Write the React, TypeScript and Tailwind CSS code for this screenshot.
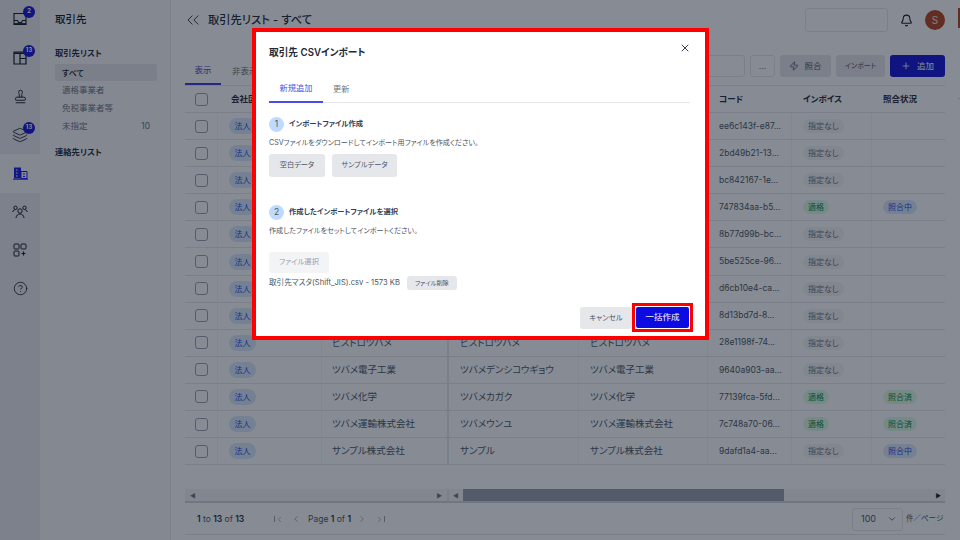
import React from "react";
import {
  Bell,
  ChevronDown,
  ChevronLeft,
  ChevronRight,
  ChevronsLeft,
  CircleHelp,
  Layers,
  Plus,
  Stamp,
  X,
  Zap,
} from "lucide-react";

type Row = {
  name?: string;
  kana?: string;
  code: string;
  invoice: string;
  status?: string;
};

const rows: Row[] = [
  { code: "ee6c143f-e87...", invoice: "指定なし" },
  { code: "2bd49b21-13...", invoice: "指定なし" },
  { code: "bc842167-1e...", invoice: "指定なし" },
  { code: "747834aa-b5...", invoice: "適格", status: "照合中" },
  { code: "8b77d99b-bc...", invoice: "指定なし" },
  { code: "5be525ce-96...", invoice: "指定なし" },
  { code: "d6cb10e4-ca...", invoice: "指定なし" },
  { code: "8d13bd7d-8...", invoice: "指定なし" },
  { name: "ビストロツバメ", kana: "ビストロツバメ", code: "28e1198f-74...", invoice: "指定なし" },
  { name: "ツバメ電子工業", kana: "ツバメデンシコウギョウ", code: "9640a903-aa...", invoice: "指定なし" },
  { name: "ツバメ化学", kana: "ツバメカガク", code: "77139fca-5fd...", invoice: "適格", status: "照合済" },
  { name: "ツバメ運輸株式会社", kana: "ツバメウンユ", code: "7c748a70-06...", invoice: "適格", status: "照合済" },
  { name: "サンプル株式会社", kana: "サンプル", code: "9dafd1a4-aa...", invoice: "指定なし", status: "照合中" },
];

const gridCols = "grid grid-cols-[33px_104px_127px_130px_129px_84px_80px_73px]";

const InboxIcon = () => (
  <svg width="14" height="14" viewBox="0 0 14 14" fill="none" stroke="currentColor" strokeWidth="1.1">
    <path d="M1 1.500h12v11H1z" />
    <path d="M1 8.500h3.500l1 2h3l1-2H13" />
    <path d="M1 11.800h12" strokeWidth="1.400" />
  </svg>
);

const PanelIcon = () => (
  <svg width="14" height="14" viewBox="0 0 14 14" fill="none" stroke="currentColor" strokeWidth="1.200">
    <path d="M1 1h12v12H1z" />
    <path d="M1 2.200h12" strokeWidth="1.600" />
    <path d="M7 2v11M7 7.500h6" />
  </svg>
);

const BuildingIcon = () => (
  <svg width="15" height="13" viewBox="0 0 15 13" fill="none">
    <path d="M1 0.500h7v11H1z" fill="#1414e6" />
    <path d="M8 4.500h6v7H8z" stroke="#1414e6" />
    <path d="M0 12.200h15" stroke="#1414e6" />
    <path d="M3 3h1.500M3 6h1.500M3 9h1.500" stroke="#fff" />
    <path d="M10 7h2M10 9.500h2" stroke="#1414e6" />
  </svg>
);

const PeopleIcon = () => (
  <svg width="16" height="14" viewBox="0 0 16 14" fill="none" stroke="currentColor" strokeWidth="1">
    <circle cx="8" cy="6" r="2.200" />
    <path d="M4 13c.3-2.600 1.800-4 4-4s3.700 1.400 4 4" />
    <circle cx="3.500" cy="2.800" r="1.700" />
    <circle cx="12.500" cy="2.800" r="1.700" />
    <path d="M0.700 7c.3-1.400 1.200-2.300 2.600-2.300M15.300 7c-.3-1.400-1.200-2.300-2.600-2.300" />
  </svg>
);

const AppsIcon = () => (
  <svg width="14" height="14" viewBox="0 0 14 14" fill="none" stroke="currentColor" strokeWidth="1">
    <rect x="1" y="1" width="5" height="5" rx="0.800" />
    <rect x="8" y="1" width="5" height="5" rx="0.800" />
    <rect x="1" y="8" width="5" height="5" rx="0.800" />
    <path d="M10.500 8.500v4M8.500 10.500h4" strokeWidth="1.200" />
  </svg>
);

const railItems = [
  { icon: <InboxIcon />, badge: "2" },
  { icon: <PanelIcon />, badge: "13" },
  { icon: <Stamp size={15} strokeWidth={1.5} /> },
  { icon: <Layers size={16} strokeWidth={1.3} />, badge: "13" },
  { icon: <BuildingIcon />, active: true },
  { icon: <PeopleIcon /> },
  { icon: <AppsIcon /> },
  { icon: <CircleHelp size={15} strokeWidth={1.3} /> },
];

const Rail = () => (
  <div className="flex w-[40px] shrink-0 flex-col bg-[#e9eaee] text-gray-900">
    {railItems.map((item, i) => (
      <div
        key={i}
        className={
          item.active
            ? "relative flex h-[38.500px] items-center justify-center bg-gray-50"
            : "relative flex h-[38.500px] items-center justify-center"
        }
      >
        {item.icon}
        {item.badge && (
          <span className="absolute left-[23px] top-[6px] flex h-[12px] w-[12px] items-center justify-center rounded-full bg-[#1010d8] text-[6.500px] font-semibold text-white">
            {item.badge}
          </span>
        )}
      </div>
    ))}
  </div>
);

const SubNav = () => (
  <div className="flex w-[131px] shrink-0 flex-col border-r border-gray-200 bg-gray-50 pl-[15px] pr-[13px] text-gray-700">
    <div className="mt-[13px] text-[10.500px] font-medium leading-[14px] text-gray-900">取引先</div>
    <div className="mt-[19px] text-[8.300px] font-semibold leading-[14px] text-gray-800">取引先リスト</div>
    <div className="mt-[4px] flex h-[17px] items-center rounded-[2px] bg-gray-200 pl-[7px] text-[8px] font-medium text-gray-900">
      すべて
    </div>
    <div className="flex h-[18px] items-center pl-[7px] text-[8.500px] text-gray-500">適格事業者</div>
    <div className="flex h-[18px] items-center pl-[7px] text-[8.500px] text-gray-500">免税事業者等</div>
    <div className="flex h-[18px] items-center justify-between pl-[7px] pr-[7px] text-[8.500px] text-gray-500">
      <span>未指定</span>
      <span>10</span>
    </div>
    <div className="mt-[10px] text-[8.300px] font-semibold leading-[14px] text-gray-800">連絡先リスト</div>
  </div>
);

const Badge = ({ label }: { label: string }) => {
  const tone =
    label === "指定なし"
      ? "bg-gray-100 text-gray-500"
      : label === "適格" || label === "照合済"
        ? "bg-green-100 text-green-700"
        : "bg-blue-100 text-blue-700";
  return (
    <span className={`inline-flex h-[14px] items-center rounded-full px-[5px] text-[8px] ${tone}`}>{label}</span>
  );
};

const Table = () => (
  <div className="mr-[15px] ml-[14px] flex min-h-0 flex-1 flex-col">
    <div className={`${gridCols} h-[28px] shrink-0 items-center border-y border-gray-200 text-[8.500px] font-semibold text-gray-800`}>
      <div className="flex justify-center">
        <span className="h-[13px] w-[13px] rounded-[3px] border border-gray-400 bg-white" />
      </div>
      <div className="pl-[13px]">会社区分</div>
      <div />
      <div />
      <div />
      <div className="pl-[11px]">コード</div>
      <div className="pl-[11px]">インボイス</div>
      <div className="pl-[11px]">照合状況</div>
    </div>
    {rows.map((row) => (
      <div key={row.code} className={`${gridCols} h-[27.100px] shrink-0 items-center border-b border-gray-200 text-[9.500px] text-gray-600`}>
        <div className="flex h-full items-center justify-center border-r border-gray-100">
          <span className="h-[13px] w-[13px] rounded-[3px] border border-gray-400 bg-white" />
        </div>
        <div className="flex h-full items-center border-r border-gray-100 pl-[11px]">
          <span className="inline-flex h-[16px] w-[27px] items-center justify-center rounded-full bg-blue-100 text-[8px] text-blue-700">
            法人
          </span>
        </div>
        <div className="flex h-full items-center border-r-2 border-gray-200 pl-[10px]">{row.name}</div>
        <div className="flex h-full items-center border-r border-gray-100 pl-[11px]">{row.kana}</div>
        <div className="flex h-full items-center border-r border-gray-100 pl-[11px]">{row.name}</div>
        <div className="flex h-full items-center border-r border-gray-100 pl-[11px] text-[8.500px]">{row.code}</div>
        <div className="flex h-full items-center border-r border-gray-100 pl-[11px]">
          <Badge label={row.invoice} />
        </div>
        <div className="flex h-full items-center pl-[11px]">{row.status && <Badge label={row.status} />}</div>
      </div>
    ))}
    <div className="flex-1" />
    <div className="flex h-[14px] shrink-0 border-b-2 border-gray-300 bg-gray-100 text-gray-500">
      <div className="flex w-[264px] items-center justify-between border-r-2 border-gray-200 px-[5px] text-[6px]">
        <span>◀</span>
        <span>▶</span>
      </div>
      <div className="flex flex-1 items-center text-[6px]">
        <span className="w-[14px] pl-[4px]">◀</span>
        <div className="h-full w-[321px] bg-gray-400" />
        <div className="flex-1" />
        <span className="pr-[4px] text-gray-900">▶</span>
      </div>
    </div>
    <div className="flex h-[32px] shrink-0 items-center border-b border-gray-200 pt-[1px] text-[8.500px] text-gray-600">
      <span className="ml-[12px] w-[77px]">
        <b className="font-semibold text-gray-800">1</b> to <b className="font-semibold text-gray-800">13</b> of{" "}
        <b className="font-semibold text-gray-800">13</b>
      </span>
      <span className="flex w-[34px] items-center gap-[7px] text-gray-400">
        <span className="flex items-center">
          <span className="h-[6px] w-px bg-gray-400" />
          <ChevronLeft size={9} />
        </span>
        <ChevronLeft size={10} />
      </span>
      <span className="w-[49px]">
        Page <b className="font-semibold text-gray-800">1</b> of <b className="font-semibold text-gray-800">1</b>
      </span>
      <span className="flex items-center gap-[8px] text-gray-400">
        <ChevronRight size={10} />
        <span className="flex items-center">
          <ChevronRight size={9} />
          <span className="h-[6px] w-px bg-gray-400" />
        </span>
      </span>
      <div className="ml-auto flex items-center">
        <div className="flex h-[23px] w-[51px] items-center justify-between rounded-[3px] border border-gray-200 bg-white pl-[8px] pr-[5px] text-[9px]">
          100
          <ChevronDown size={10} />
        </div>
        <span className="ml-[3px] w-[39px] whitespace-nowrap text-[7.500px]">件／ページ</span>
      </div>
    </div>
  </div>
);

const Main = () => (
  <div className="relative flex min-w-0 flex-1 flex-col bg-white">
    <div className="flex h-[40px] shrink-0 items-center pl-[14px] pr-[15px]">
      <ChevronsLeft size={20} strokeWidth={1.200} className="ml-[-2px] text-gray-700" />
      <span className="ml-[5px] text-[11.300px] font-medium text-gray-800">取引先リスト - すべて</span>
      <div className="ml-auto h-[24px] w-[83px] rounded-[3px] border border-gray-200" />
      <Bell size={13} className="ml-[12px] text-gray-900" />
      <span className="ml-[12px] flex h-[20px] w-[20px] items-center justify-center rounded-full bg-[#b9431f] text-[10px] text-gray-200">
        S
      </span>
    </div>
    <div className="flex h-[45px] shrink-0 items-end pl-[14px] pr-[15px]">
      <div className="flex h-[31px] w-[36px] items-center justify-center border-b-2 border-[#3b3bdc] pt-[3px] text-[8.500px] text-[#4747c8]">
        表示
      </div>
      <div className="ml-[11px] flex h-[31px] items-center pt-[3px] text-[8.500px] text-gray-500">非表示</div>
      <div className="mb-[8px] ml-auto flex h-[22px] items-center gap-[5px] text-[8.500px]">
        <div className="h-full w-[60px] rounded-[3px] border border-gray-200" />
        <div className="flex h-full w-[25px] items-center justify-center rounded-[3px] border border-gray-200 text-gray-500">
          ...
        </div>
        <div className="flex h-full w-[51px] items-center justify-center gap-[5px] rounded-[3px] bg-gray-200 text-gray-600">
          <Zap size={10} />
          照合
        </div>
        <div className="flex h-full w-[49px] items-center justify-center rounded-[3px] bg-gray-200 text-[7px] text-gray-600">
          インポート
        </div>
        <div className="flex h-full w-[55px] items-center justify-center gap-[6px] rounded-[3px] bg-[#1010d8] text-white">
          <Plus size={10} />
          追加
        </div>
      </div>
    </div>
    <Table />
    <div className="h-[5px] shrink-0" />
    {/* sliver of the next panel at the right edge */}
    <div className="absolute right-0 top-[8px] h-[20px] w-[2px] bg-[#b9431f]" />
    <div className="absolute right-0 top-[98px] h-px w-[2px] bg-gray-300" />
  </div>
);

const Step = ({ n, title }: { n: number; title: string }) => (
  <div className="flex items-center gap-[5px]">
    <span className="flex h-[15px] w-[15px] items-center justify-center rounded-full bg-blue-200 text-[8.500px] text-gray-600">
      {n}
    </span>
    <span className="text-[7.300px] font-semibold text-gray-700">{title}</span>
  </div>
);

const Modal = () => (
  <div className="absolute left-[252px] top-[28px] h-[312px] w-[457px] border-4 border-[#ff0000] bg-white text-gray-700">
    <div className="flex h-full flex-col pl-[13px] pr-[15px]">
      <div className="flex h-[29px] shrink-0 items-end justify-between">
        <span className="text-[9.700px] font-semibold leading-[16px] text-gray-800">取引先 CSVインポート</span>
        <X size={12} className="mb-[7px] mr-[-1px] text-gray-700" />
      </div>
      <div className="mt-[18px] flex h-[24px] shrink-0 border-b border-gray-200 text-[8.200px]">
        <div className="flex h-[24px] w-[54px] items-center justify-center border-b-2 border-[#4a4ae6] pb-[3px] text-[#4d4de0]">
          新規追加
        </div>
        <div className="ml-[10px] flex h-[23px] items-center pb-[3px] text-gray-500">更新</div>
      </div>
      <div className="mt-[14px]">
        <Step n={1} title="インポートファイル作成" />
      </div>
      <p className="mt-[5px] text-[7.100px] leading-[12px] text-gray-600">
        CSVファイルをダウンロードしてインポート用ファイルを作成ください。
      </p>
      <div className="mt-[5px] flex gap-[7px] text-[7.200px] text-gray-600">
        <div className="flex h-[23px] w-[56px] items-center justify-center rounded-[3px] bg-gray-200">空白データ</div>
        <div className="flex h-[23px] w-[65px] items-center justify-center rounded-[3px] bg-gray-200">サンプルデータ</div>
      </div>
      <div className="mt-[28px]">
        <Step n={2} title="作成したインポートファイルを選択" />
      </div>
      <p className="mt-[5px] text-[7.100px] leading-[12px] text-gray-600">作成したファイルをセットしてインポートください。</p>
      <div className="mt-[15px] flex h-[21px] w-[60px] items-center justify-center rounded-[3px] bg-gray-100 text-[7.300px] text-gray-400">
        ファイル選択
      </div>
      <div className="mt-[3px] flex items-center gap-[7px] text-[7.600px] text-gray-600">
        <span>取引先マスタ(Shift_JIS).csv - 1573 KB</span>
        <span className="flex h-[14px] w-[50px] items-center justify-center rounded-[3px] bg-gray-200 text-[6.200px]">ファイル削除</span>
      </div>
      <div className="mt-auto mb-[4px] mr-[-3px] flex items-center justify-end text-[8.500px]">
        <div className="flex h-[22px] w-[52px] items-center justify-center rounded-[3px] bg-gray-200 text-[7.400px] text-gray-600">キャンセル</div>
        <div className="border-[3px] border-[#ff0000] bg-white p-px">
          <div className="flex h-[21px] w-[53px] items-center justify-center rounded-[2px] bg-[#0c0ce2] text-white">一括作成</div>
        </div>
      </div>
    </div>
  </div>
);

export default function App() {
  return (
    <div className="relative flex h-[540px] w-[960px] overflow-hidden font-['Inter','Noto_Sans_CJK_JP',sans-serif] [font-feature-settings:'palt']">
      <Rail />
      <SubNav />
      <Main />
      <div className="absolute inset-0 bg-gray-900/50 backdrop-blur-[0.5px]" />
      <Modal />
    </div>
  );
}
